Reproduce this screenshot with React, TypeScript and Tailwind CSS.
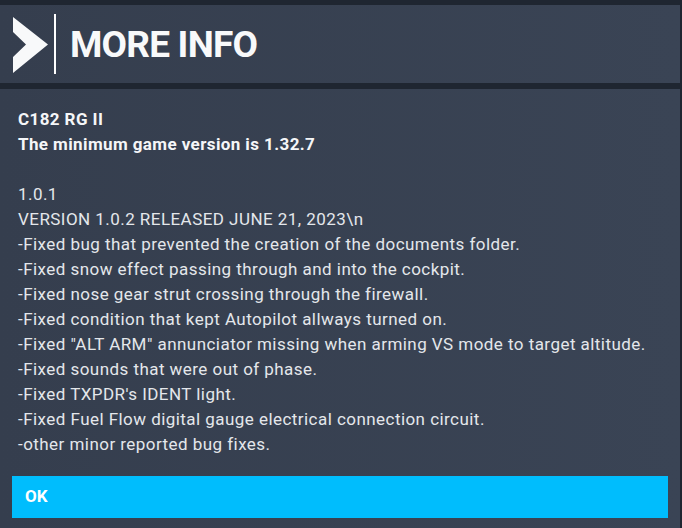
export default function App() {
  const lines = [
    "VERSION 1.0.2 RELEASED JUNE 21, 2023\\n",
    "-Fixed bug that prevented the creation of the documents folder.",
    "-Fixed snow effect passing through and into the cockpit.",
    "-Fixed nose gear strut crossing through the firewall.",
    "-Fixed condition that kept Autopilot allways turned on.",
    '-Fixed "ALT ARM" annunciator missing when arming VS mode to target altitude.',
    "-Fixed sounds that were out of phase.",
    "-Fixed TXPDR's IDENT light.",
    "-Fixed Fuel Flow digital gauge electrical connection circuit.",
    "-other minor reported bug fixes.",
  ];

  return (
    <div className="h-[528px] w-[682px] overflow-hidden bg-[#1f2631] pt-[5px] pr-[2px] font-['Roboto',sans-serif]">
      <div className="flex h-[78px] items-center bg-gradient-to-r from-[#353e4e] to-[#3a4455]">
        <svg width="50" height="78" viewBox="0 0 50 78" className="shrink-0">
          <polygon points="13,12 48,39.5 13,68 13,52 26,39.5 13,27" fill="#f8f9fa" />
        </svg>
        <div className="ml-[4px] h-[60px] w-[2px] bg-white" />
        <h1 className="ml-[14px] text-[37px] font-bold leading-none tracking-[-0.8px] text-[#f8f9fa]">
          MORE INFO
        </h1>
      </div>
      <div className="mt-[5.5px] h-[440px] bg-gradient-to-r from-[#353e4e] to-[#3a4455] px-[12px] pt-[18px]">
        <div className="px-[6px] text-[17px] leading-[25px] tracking-[0.45px] text-[#e4e7eb]">
          <p className="font-bold tracking-[0.4px] text-[#f5f6f8]">C182 RG II</p>
          <p className="font-bold tracking-[0.4px] text-[#f5f6f8]">The minimum game version is 1.32.7</p>
          <p>&nbsp;</p>
          <p>1.0.1</p>
          {lines.map((line) => (
            <p key={line}>{line}</p>
          ))}
        </div>
        <button
          type="button"
          className="mt-[19px] flex h-[42px] w-full items-center bg-[#00bdfd] px-[13px] text-[17px] font-bold text-white"
        >
          OK
        </button>
      </div>
    </div>
  );
}
